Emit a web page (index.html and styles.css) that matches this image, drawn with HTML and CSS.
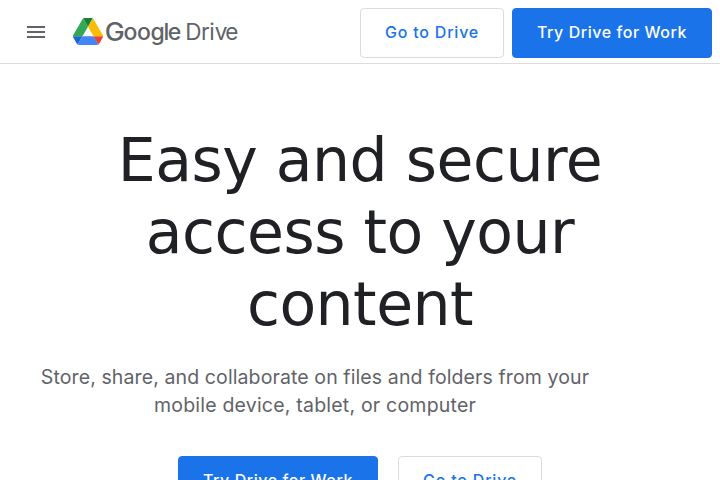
FILE: index.html
```html
<!DOCTYPE html>
<html lang="en">
<head>
<meta charset="utf-8">
<title>Google Drive</title>
<link rel="stylesheet" href="styles.css">
</head>
<body>
<header class="header">
  <button class="menu" aria-label="Menu">
    <svg width="18" height="12" viewBox="0 0 18 12"><path d="M0 0h18v2H0zM0 5h18v2H0zM0 10h18v2H0z" fill="#5f6368"/></svg>
  </button>
  <a class="brand" href="#">
    <svg class="mark" width="30" height="27" viewBox="0 0 87.3 78">
      <path d="m6.6 66.85 3.85 6.65c.8 1.4 1.95 2.5 3.3 3.3l13.75-23.8h-27.5c0 1.55.4 3.1 1.2 4.5z" fill="#1967d2"/>
      <path d="m43.65 25-13.75-23.8c-1.35.8-2.5 1.9-3.3 3.3l-25.4 44a9.06 9.06 0 0 0 -1.2 4.5h27.5z" fill="#34a853"/>
      <path d="m73.55 76.8c1.35-.8 2.5-1.9 3.3-3.3l1.6-2.75 7.65-13.25c.8-1.4 1.2-2.95 1.2-4.5h-27.5l5.85 11.5z" fill="#ea4335"/>
      <path d="m43.65 25 13.75-23.8c-1.35-.8-2.9-1.2-4.5-1.2h-18.5c-1.6 0-3.15.45-4.5 1.2z" fill="#188038"/>
      <path d="m59.8 53h-32.3l-13.75 23.8c1.35.8 2.9 1.2 4.5 1.2h50.8c1.6 0 3.15-.45 4.5-1.2z" fill="#4285f4"/>
      <path d="m73.4 26.5-12.7-22c-.8-1.4-1.95-2.5-3.3-3.3l-13.75 23.8 16.15 28h27.45c0-1.55-.4-3.1-1.2-4.5z" fill="#fbbc04"/>
    </svg>
    <svg class="wordmark" width="134" height="34" viewBox="0 0 134 34">
      <text class="google"><tspan class="initial" x="0.7" y="25.6" textLength="20" lengthAdjust="spacingAndGlyphs">G</tspan><tspan x="19.6 33 46.6 59.4 63.8" y="25.4">oogle</tspan></text>
      <text class="drive" x="81.2 97.1 105.2 110.7 121.3" y="25.3">Drive</text>
    </svg>
  </a>
  <nav class="actions">
    <a class="button outline" href="#"><span class="go">Go to Drive</span></a>
    <a class="button filled" href="#"><span class="try">Try Drive for Work</span></a>
  </nav>
</header>
<main class="hero">
  <h1>Easy and secure<br>access to your<br>content</h1>
  <p><span class="line-a">Store, share, and collaborate on files and folders from your</span> <span class="line-b">mobile device, tablet, or computer</span></p>
  <div class="cta">
    <a class="button filled" href="#"><span class="try">Try Drive for Work</span></a>
    <a class="button outline" href="#"><span class="go">Go to Drive</span></a>
  </div>
</main>
</body>
</html>
```
FILE: styles.css
```css
* { box-sizing: border-box; }
html, body { height: 100%; }
body { margin: 0; overflow: hidden; background: #fff; color: #202124; font-family: Inter, sans-serif; }
a { text-decoration: none; }
.header { display: flex; align-items: flex-start; height: 64px; border-bottom: 1px solid #dadce0; padding: 8px 8px 0 27px; }
.menu { display: flex; border: 0; padding: 18px 0 0; background: none; }
.brand { display: flex; margin-left: 28px; padding-top: 10px; }
.mark { flex: none; }
.wordmark { flex: none; margin: -3px 0 0 1px; overflow: visible; }
.google, .drive { fill: #5f6368; font-size: 22.5px; font-optical-sizing: none; }
.google { font-size: 23px; font-weight: 500; }
.initial { font-size: 25px; }
.actions { display: flex; gap: 8px; margin-left: auto; }
.button { display: flex; align-items: center; justify-content: center; height: 50px; border: 1px solid #dadce0; border-radius: 4px; padding-bottom: 2px; color: #1a73e8; font-size: 16px; font-weight: 500; line-height: 24px; white-space: nowrap; }
.outline { width: 144px; }
.filled { width: 200px; border-color: #1a73e8; background: #1a73e8; color: #fff; }
.go { letter-spacing: .8px; }
.try { letter-spacing: .55px; }
.hero { padding-top: 60px; }
h1 { margin: 0; font: 400 60px/72px "DejaVu Sans", sans-serif; letter-spacing: -.5px; text-align: center; white-space: nowrap; }
p { display: flex; flex-direction: column; align-items: center; width: 550px; margin: 23px 0 0 40px; color: #5f6368; font-size: 19.5px; line-height: 28px; white-space: nowrap; }
.line-a { letter-spacing: .11px; }
.line-b { letter-spacing: .21px; }
.cta { display: flex; justify-content: center; gap: 20px; margin-top: 37px; }
```
